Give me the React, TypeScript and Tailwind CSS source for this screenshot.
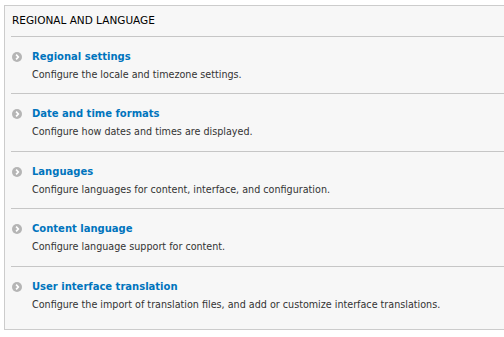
const items = [
  { title: 'Regional settings', desc: 'Configure the locale and timezone settings.', h: 'h-[57px] border-b' },
  { title: 'Date and time formats', desc: 'Configure how dates and times are displayed.', h: 'h-[58px] border-b' },
  { title: 'Languages', desc: 'Configure languages for content, interface, and configuration.', h: 'h-[57px] border-b' },
  { title: 'Content language', desc: 'Configure language support for content.', h: 'h-[58px] border-b' },
  {
    title: 'User interface translation',
    desc: 'Configure the import of translation files, and add or customize interface translations.',
    h: 'h-[62px]',
  },
]

function Bullet() {
  return (
    <svg width="10" height="10" viewBox="0 0 10 10" className="mt-[0.5px] shrink-0">
      <circle cx="5" cy="5" r="5" fill="#b5b5b5" />
      <path d="M4.1 2.7 6.3 5 4.1 7.3" fill="none" stroke="#fff" strokeWidth="1.7" />
    </svg>
  )
}

export default function App() {
  return (
    <div className="h-[337px] w-full overflow-hidden bg-white pl-[4px] pt-[5px] font-['DejaVu_Sans',sans-serif]">
      <div className="w-[520px] border border-[#cccccc] bg-[#f7f7f7] pl-[6px]">
        <h2 className="h-[31px] border-b border-[#c6c6c6] pl-[1px] pt-[8px] text-[10.5px] leading-[12px] text-[#000]">
          REGIONAL AND LANGUAGE
        </h2>
        <ul>
          {items.map((item) => (
            <li key={item.title} className={`${item.h} border-[#c6c6c6] pt-[14px]`}>
              <div className="flex items-start gap-[10px] pl-[1px]">
                <Bullet />
                <div>
                  <a href="#" className="block text-[10px] font-bold leading-[12px] text-[#0074bd]">
                    {item.title}
                  </a>
                  <p className="mt-[6px] text-[9.6px] leading-[12px] text-[#333]">{item.desc}</p>
                </div>
              </div>
            </li>
          ))}
        </ul>
      </div>
    </div>
  )
}
